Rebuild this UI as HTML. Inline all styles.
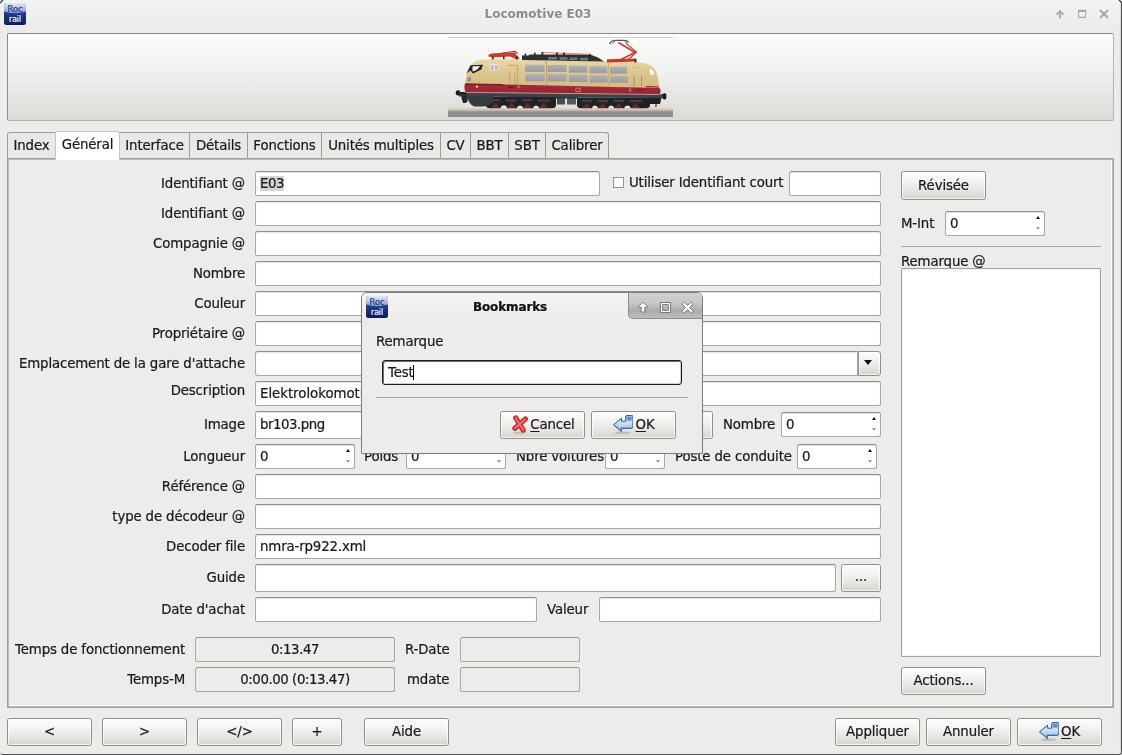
<!DOCTYPE html>
<html lang="fr">
<head>
<meta charset="utf-8">
<title>Locomotive E03</title>
<style>
*{box-sizing:border-box;margin:0;padding:0}
html,body{width:1122px;height:755px;overflow:hidden}
body{background:#edeceb;font-family:"DejaVu Sans","Liberation Sans",sans-serif;font-size:13.33px;letter-spacing:-0.14px;color:#1a1a1a;-webkit-text-stroke:0.22px;position:relative}
.abs{position:absolute}
.lbl{position:absolute;white-space:nowrap;line-height:16px;height:17px;padding-top:1px}
.r{text-align:right}
.inp{position:absolute;height:25px;background:#fff;border:1px solid #a9a89f;border-top-color:#8f8e85;border-radius:2.5px;box-shadow:inset 0 1px 1px rgba(0,0,0,.10);padding:0 4px;line-height:23px;white-space:nowrap;overflow:hidden}
.ro{background:#edeceb;text-align:center;box-shadow:none;border-color:#a9a89f;border-top-color:#98978e;letter-spacing:-0.44px}
.btn{position:absolute;height:28px;border:1px solid #929188;border-radius:2.5px;background:linear-gradient(#fdfdfc 0%,#f3f3f1 35%,#e6e5e2 68%,#d5d4d0 100%);text-align:center;line-height:26px;white-space:nowrap;box-shadow:inset 0 0 0 1px rgba(255,255,255,.7)}
u{text-underline-offset:2.0px;text-decoration-thickness:1px}
.spin .ar{position:absolute;right:4.5px;width:0;height:0;border-left:2.5px solid transparent;border-right:2.5px solid transparent}
.spin .up{top:4px;border-bottom:3px solid #111}
.spin .dn{top:15px;border-top:3px solid #9b9b9b}
#titlebar{left:0;top:0;width:1122px;height:28px;background:linear-gradient(#f3f3f2,#edeceb)}
#title{left:0;width:1076px;top:6px;text-align:center;font-weight:bold;color:#8b8b89;font-size:12px;line-height:16px;-webkit-text-stroke:0;letter-spacing:0;text-shadow:0 1px 0 rgba(255,255,255,.8)}
.tab{position:absolute;top:132px;height:26px;padding-top:1px;border:1px solid #9d9c94;border-bottom:none;border-left:none;background:#e9e8e6;line-height:24px;text-align:center;white-space:nowrap}
.tab.first{border-left:1px solid #9d9c94;border-top-left-radius:3px}
.tab.act{top:131px;height:29px;padding-top:0;background:#fff;border:1px solid #c4c3bd;border-bottom:none;border-radius:3px 3px 0 0;line-height:25px;z-index:2}
</style>
</head>
<body>
<div id="root" style="position:absolute;left:0;top:0;width:1122px;height:755px;will-change:transform">

<svg width="0" height="0" style="position:absolute">
<defs>
<linearGradient id="icTop" x1="0" y1="0" x2="0" y2="1"><stop offset="0" stop-color="#e3e8f9"/><stop offset="1" stop-color="#8799d4"/></linearGradient>
<linearGradient id="icBot" x1="0" y1="0" x2="0" y2="1"><stop offset="0" stop-color="#3553a8"/><stop offset="0.5" stop-color="#203a8c"/><stop offset="1" stop-color="#0a1a60"/></linearGradient>
<clipPath id="icClip"><rect x="0" y="0" width="22" height="22" rx="2.5"/></clipPath>
<symbol id="rocicon" viewBox="0 0 22 22">
<g clip-path="url(#icClip)">
<rect width="22" height="22" fill="url(#icBot)"/>
<path d="M0 0H22V8.6Q11 11.8 0 8.6Z" fill="url(#icTop)"/>
</g>
<text x="11" y="8.9" font-family="DejaVu Sans, Liberation Sans, sans-serif" font-size="8" text-anchor="middle" fill="#32468e" stroke="#32468e" stroke-width=".25" textLength="15" lengthAdjust="spacingAndGlyphs">Roc</text>
<text x="11" y="19.2" font-family="DejaVu Sans, Liberation Sans, sans-serif" font-size="8" text-anchor="middle" fill="#f4f6ff" stroke="#f4f6ff" stroke-width=".2" textLength="12" lengthAdjust="spacingAndGlyphs">rail</text>
</symbol>
<linearGradient id="okg" x1="0" y1="0" x2="0" y2="1"><stop offset="0" stop-color="#8fb4e2"/><stop offset="0.4" stop-color="#c3d8f0"/><stop offset="0.62" stop-color="#9dbee8"/><stop offset="1" stop-color="#5c8ecd"/></linearGradient>
<symbol id="okicon" viewBox="0 0 20 19">
<ellipse cx="9.6" cy="17.7" rx="8" ry="1.2" fill="#000" opacity=".16"/>
<path d="M8.6 3V6.2H12.7V1.5Q12.7 0.5 13.7 0.5H18.9Q19.9 0.5 19.9 1.5V11.4Q19.9 13.4 17.9 13.4H8.4V16.6L0.4 9.8Z" fill="url(#okg)" stroke="#2f62a6" stroke-width="1" stroke-linejoin="round"/>
<rect x="14.3" y="1.9" width="4.2" height="3.6" fill="#4f82c4" opacity=".85"/>
<path d="M7.4 5.6V7.4H13.9V6.6H18.6V10.8Q18.6 12.1 17.3 12.1H7.2V14L2.2 9.8Z" fill="#dbe9f8" opacity=".55"/>
</symbol>
<linearGradient id="cxg" x1="0" y1="0" x2="0" y2="1"><stop offset="0" stop-color="#f58a8a"/><stop offset="0.5" stop-color="#e23a3a"/><stop offset="1" stop-color="#ef6a6a"/></linearGradient>
<symbol id="cancelicon" viewBox="0 0 17 19">
<ellipse cx="7.6" cy="17.8" rx="6.4" ry="1.1" fill="#000" opacity=".15"/>
<g fill="none" stroke-linecap="round">
<path d="M3.6 2.8L11.2 15.2M13.4 4L2.8 13.4" stroke="#ba1620" stroke-width="5"/>
<path d="M3.6 2.8L11.2 15.2M13.4 4L2.8 13.4" stroke="#ea4046" stroke-width="3.2"/>
<path d="M3.8 3.2L11 14.8M13 4.4L3.2 13" stroke="#f79a9a" stroke-width="1.1" opacity=".75"/>
</g>
</symbol>
</defs>
</svg>
<!-- window frame -->
<div class="abs" id="titlebar"></div>
<div class="abs" id="title">Locomotive E03</div>

<!-- image panel -->
<div class="abs" id="imgpanel" style="left:7px;top:33px;width:1107px;height:88px;border:1px solid #8c8b83;border-right-color:#b5b4ae;border-bottom-color:#b5b4ae;border-radius:2px;background:linear-gradient(#fcfcfb 0%,#f1f1ef 42%,#dadad7 100%)"></div>


<!-- locomotive picture -->
<svg class="abs" id="loco" style="left:446px;top:35px" width="230" height="84" viewBox="446 35 230 84">
<defs>
<linearGradient id="lbg" x1="0" y1="0" x2="0" y2="1"><stop offset="0" stop-color="#ffffff"/><stop offset=".55" stop-color="#f4f4f3"/><stop offset="1" stop-color="#e4e4e2"/></linearGradient>
<linearGradient id="beige" x1="0" y1="0" x2="0" y2="1"><stop offset="0" stop-color="#ead9a6"/><stop offset=".35" stop-color="#dfca94"/><stop offset="1" stop-color="#d3ba80"/></linearGradient>
<linearGradient id="redb" x1="0" y1="0" x2="0" y2="1"><stop offset="0" stop-color="#7e1c2a"/><stop offset=".25" stop-color="#a22a3a"/><stop offset="1" stop-color="#962434"/></linearGradient>
<linearGradient id="grl" x1="0" y1="0" x2="0" y2="1"><stop offset="0" stop-color="#b0b1b4"/><stop offset="1" stop-color="#9a9b9e"/></linearGradient>
<filter id="soft" x="-5%" y="-5%" width="110%" height="110%"><feGaussianBlur stdDeviation="0.38"/></filter>
</defs>
<rect x="448" y="37" width="225" height="1" fill="#cfcfcd"/>
<g filter="url(#soft)">
<!-- track -->
<rect x="448" y="108.3" width="225" height="3" fill="#d6c9b3"/>
<rect x="448" y="110.8" width="225" height="6.2" fill="#8e8e8e"/>
<rect x="448" y="110.6" width="225" height="1" fill="#a9a39a"/>
<!-- bogies -->
<path d="M486 97H556V105Q556 108.3 552 108.3H490Q486 108.3 486 105Z" fill="#202124"/>
<path d="M577 97.5H650V105Q650 108.3 646 108.3H581Q577 108.3 577 105Z" fill="#202124"/>
<rect x="557" y="98" width="8" height="6.5" fill="#4a4d52"/><rect x="567" y="98" width="9" height="6.5" fill="#55585d"/>
<rect x="556" y="96" width="22" height="2.5" fill="#2a2d31"/>
<g fill="#7d2320"><rect x="492" y="105.6" width="7" height="2.2"/><rect x="508" y="105.6" width="7" height="2.2"/><rect x="524" y="105.6" width="7" height="2.2"/><rect x="540" y="105.6" width="7" height="2.2"/><rect x="583" y="105.8" width="7" height="2.2"/><rect x="599" y="105.8" width="7" height="2.2"/><rect x="615" y="105.8" width="7" height="2.2"/><rect x="632" y="105.8" width="7" height="2.2"/></g>
<g fill="#e9e6e0"><path d="M500 108.4L502 105.6H505.6L507.6 108.4Z"/><path d="M516.4 108.4L518.4 105.8H521.6L523.6 108.4Z"/><path d="M532.6 108.4L534.6 105.8H537.6L539.6 108.4Z"/><path d="M591.4 108.4L593.4 105.8H596.4L598.4 108.4Z"/><path d="M607.6 108.4L609.6 105.8H612.6L614.6 108.4Z"/><path d="M623.8 108.4L625.8 105.8H629.2L631.2 108.4Z"/></g>
<g fill="#3e4044"><rect x="490" y="99" width="10" height="2.4"/><rect x="506" y="99.4" width="10" height="2.4"/><rect x="522" y="99" width="10" height="2.4"/><rect x="538" y="99.4" width="12" height="2.4"/><rect x="582" y="99.6" width="10" height="2.4"/><rect x="598" y="99.8" width="10" height="2.4"/><rect x="614" y="99.6" width="10" height="2.4"/><rect x="630" y="99.8" width="12" height="2.4"/></g>
<g fill="#4a3a36"><circle cx="495.5" cy="104.4" r="1.6"/><circle cx="511.5" cy="104.4" r="1.6"/><circle cx="527.5" cy="104.4" r="1.6"/><circle cx="543.5" cy="104.4" r="1.6"/><circle cx="586.5" cy="104.6" r="1.6"/><circle cx="602.5" cy="104.6" r="1.6"/><circle cx="618.5" cy="104.6" r="1.6"/><circle cx="635.5" cy="104.6" r="1.6"/></g>
<!-- front skirt / rear parts -->
<path d="M467.5 92H494V101Q490 106.5 482 106.5H474Q468.5 104 467.5 97Z" fill="#353b41"/>

<path d="M648 96H662L660 104H650Z" fill="#222428"/>
<!-- frame -->
<path d="M459 92L663 94.2V98L459 96.6Z" fill="#3c4349"/>
<rect x="455.8" y="90.2" width="4.4" height="5.4" rx="2" fill="#1b1c1f"/><rect x="459" y="92.2" width="8" height="2.6" fill="#24262a"/>
<rect x="662.6" y="93.2" width="3.8" height="6.2" rx="1.6" fill="#1b1c1f"/>
<!-- body beige -->
<path d="M465.4 85Q465.6 76 468.6 69.5L472 64Q475 60.6 482 59.6Q500 58.6 525 59.8L600 61.2L640 62.4Q650 63.4 654.5 68.5Q658.6 76 659.4 88.5L465.4 85Z" fill="url(#beige)"/>
<!-- red band -->
<path d="M465 83.6L659.6 88Q661.5 91 659.6 94.5L465.6 92.4Q463.6 88 465 83.6Z" fill="url(#redb)"/>
<path d="M465.6 92.4L659.6 94.5" stroke="#d8c79a" stroke-width=".7"/>
<path d="M646 86.6L659 87" stroke="#9a2030" stroke-width="1.2"/>
<path d="M466 84L503 84.6" stroke="#821a28" stroke-width="1.2"/>
<!-- roof equipment -->
<path d="M522 55.4H528L530 54.4H590L598 57.4L604 61.4L522 60Z" fill="#2e322f"/>
<g fill="#70757a"><rect x="548" y="57" width="9" height="2.6"/><rect x="559.5" y="57.2" width="8" height="2.6"/><rect x="569.5" y="57.4" width="8" height="2.6"/><rect x="580" y="57.8" width="8" height="2.6"/></g>
<path d="M542 52.4L591 54.4" stroke="#d9747a" stroke-width=".9"/>
<g fill="#2a2a2a"><rect x="541.5" y="52" width="1.8" height="3.4"/><rect x="556" y="52.4" width="1.8" height="3"/><rect x="563" y="52.6" width="1.8" height="3"/><rect x="589" y="54" width="1.8" height="3"/><rect x="524.6" y="53.6" width="1.6" height="3.6"/><rect x="534" y="52.6" width="1.6" height="3.6"/></g>
<!-- folded pantograph left -->
<path d="M488 56.2Q489 53.4 494 53.2L515 52.4L517 56L520 58.6L516 59.2L510 56.6L492 57.6Z" fill="#d23a2c"/>
<path d="M502 53L515 51.4L517.6 53.4" fill="none" stroke="#c03a30" stroke-width="1.2"/>
<rect x="492" y="56.6" width="1.6" height="3" fill="#333"/><rect x="503" y="56.2" width="1.6" height="3" fill="#333"/><rect x="516" y="56" width="1.8" height="3.4" fill="#333"/>
<!-- raised pantograph right -->
<path d="M607 59.2L636 58.6L636.4 61.6L607 62.4Z" fill="#c8382c"/>
<path d="M620 60L635 52.4L618.4 42.6" fill="none" stroke="#cf3d30" stroke-width="1.7"/>
<path d="M628 60L636.4 52L626 43.4" fill="none" stroke="#cf3d30" stroke-width="1.2"/>
<path d="M609.6 44Q611 40.4 616 40.4H624Q627.6 40.4 628.4 42.6" fill="none" stroke="#55585a" stroke-width="1.4"/>
<path d="M612 44.4L615 41M625 41L627 44" stroke="#6a6d70" stroke-width="1"/>
<rect x="634.6" y="59" width="1.8" height="3.6" fill="#333"/>
<!-- grilles -->
<g fill="url(#grl)">
<rect x="525" y="64.8" width="19.6" height="7"/><rect x="547.4" y="65" width="19.2" height="7"/><rect x="568.8" y="65.6" width="18.6" height="7"/><rect x="589.4" y="66.2" width="18" height="7"/><rect x="610" y="66.8" width="17" height="6.8"/>
<rect x="525.4" y="74" width="19.4" height="7.2"/><rect x="547.6" y="74.2" width="19" height="7.2"/><rect x="569" y="74.8" width="18.6" height="7.2"/><rect x="589.6" y="75.4" width="18" height="7.2"/><rect x="610.2" y="76" width="17.6" height="6.8"/>
</g>
<path d="M545.6 60.4Q546.6 62 546.6 66V84.6" fill="none" stroke="#b89c5a" stroke-width=".9"/>
<path d="M608.6 62V86" fill="none" stroke="#c2a765" stroke-width=".8"/>
<!-- doors -->
<path d="M507 65.4H517.6V84M509.6 72.4V83.4M515 72.4V83.4" fill="none" stroke="#b79c5c" stroke-width=".8"/>
<path d="M634 75.4V86M641.6 75.4V86.2" fill="none" stroke="#a88d4e" stroke-width=".9"/>
<path d="M633 67.6H642" stroke="#c6ad6e" stroke-width=".6"/>
<!-- windows -->
<path d="M466.4 73.6L470.6 65.2L483 64.8L481.4 69.6L473 73.4L470.4 70.4Z" fill="#24282b"/>
<path d="M472.4 66.4L480 66L477.6 69.8L472.6 71.6Z" fill="#f2f2f0"/>
<path d="M474.6 72.2L480 67" stroke="#222" stroke-width=".8"/>
<rect x="489.6" y="64.2" width="9.2" height="6.2" fill="#eceae6"/><rect x="490.6" y="65.2" width="7.4" height="4.4" fill="#b9bcc0"/><rect x="493.9" y="64.6" width="1" height="5.6" fill="#f4f2ee"/>
<path d="M467.8 77.4L470.8 77V81.4L467.4 81.6Z" fill="#8c9490"/>
<path d="M648.6 69.4Q649.4 68 651.6 68.6Q654.6 71 655.2 74.6Q654 76 651.2 75.4Q648.4 74 648.6 69.4Z" fill="#f6f6f4" stroke="#bda868" stroke-width=".6"/>
<!-- small details -->
<circle cx="477" cy="86.6" r="1.2" fill="#f4ead8"/>
<rect x="575.8" y="88.2" width="4.6" height="3.4" rx=".6" fill="none" stroke="#dba0a6" stroke-width=".7"/>
<rect x="508" y="86.4" width="5" height="1.4" fill="#7c1622"/><rect x="637" y="89.6" width="5" height="1.4" fill="#7c1622"/>
<rect x="517.6" y="85.4" width="2" height="3" fill="#d08a90" opacity=".7"/><rect x="629" y="88.2" width="2.4" height="3.4" fill="#d08a90" opacity=".6"/>
<path d="M461.6 95.6H467.6V101.4L465.4 103H463.2L461.6 99Z" fill="#25272a"/>
<path d="M656 98V107" stroke="#222" stroke-width="1.1"/>
</g>
</svg>

<!-- notebook body -->
<div class="abs" id="nb" style="left:7px;top:158px;width:1107px;height:550px;border:1px solid #a09f97;box-shadow:inset 0 0 0 1px #bab9b3, inset -2px -2px 0 0 #ffffff"></div>

<!-- tabs -->
<div class="tab first" style="left:7px;width:49px">Index</div>
<div class="tab act" style="left:55px;width:65px">Général</div>
<div class="tab" style="left:120px;width:70px">Interface</div>
<div class="tab" style="left:190px;width:58px">Détails</div>
<div class="tab" style="left:248px;width:74px">Fonctions</div>
<div class="tab" style="left:322px;width:119px">Unités multiples</div>
<div class="tab" style="left:441px;width:30px">CV</div>
<div class="tab" style="left:471px;width:38px">BBT</div>
<div class="tab" style="left:509px;width:37px">SBT</div>
<div class="tab" style="left:546px;width:63px;border-top-right-radius:3px">Calibrer</div>

<!-- form labels -->
<div class="lbl r" style="right:877px;top:175px">Identifiant @</div>
<div class="lbl r" style="right:877px;top:205px">Identifiant @</div>
<div class="lbl r" style="right:877px;top:235px">Compagnie @</div>
<div class="lbl r" style="right:877px;top:265px">Nombre</div>
<div class="lbl r" style="right:877px;top:295px">Couleur</div>
<div class="lbl r" style="right:877px;top:325px">Propriétaire @</div>
<div class="lbl r" style="right:877px;top:355px">Emplacement de la gare d'attache</div>
<div class="lbl r" style="right:877px;top:382px">Description</div>
<div class="lbl r" style="right:877px;top:416px">Image</div>
<div class="lbl r" style="right:877px;top:448px">Longueur</div>
<div class="lbl r" style="right:877px;top:478px">Référence @</div>
<div class="lbl r" style="right:877px;top:508px">type de décodeur @</div>
<div class="lbl r" style="right:877px;top:538px">Decoder file</div>
<div class="lbl r" style="right:877px;top:569px">Guide</div>
<div class="lbl r" style="right:877px;top:601px">Date d'achat</div>

<!-- form inputs -->
<div class="inp" style="left:255px;top:171px;width:345px"><span style="background:#d6d5d3;letter-spacing:-0.45px;padding-right:0.4px">E03</span></div>
<div class="abs" style="left:613px;top:177px;width:11px;height:11px;border:1px solid #96958c;background:#fff"></div>
<div class="lbl" style="left:629px;top:174px">Utiliser Identifiant court</div>
<div class="inp" style="left:789px;top:171px;width:92px"></div>
<div class="inp" style="left:255px;top:201px;width:626px"></div>
<div class="inp" style="left:255px;top:231px;width:626px"></div>
<div class="inp" style="left:255px;top:261px;width:626px"></div>
<div class="inp" style="left:255px;top:291px;width:626px"></div>
<div class="inp" style="left:255px;top:321px;width:626px"></div>
<div class="inp" style="left:255px;top:351px;width:603px;border-radius:3px 0 0 3px"></div>
<div class="btn" style="left:858px;top:351px;width:23px;height:25px;border-radius:0 3px 3px 0"><span class="abs" style="left:5px;top:8px;width:0;height:0;border-left:4.5px solid transparent;border-right:4.5px solid transparent;border-top:5px solid #111"></span></div>
<div class="inp" style="left:255px;top:381px;width:626px;letter-spacing:-0.03px">Elektrolokomotive</div>
<div class="inp" style="left:255px;top:411px;width:418px;height:28px;line-height:26px;letter-spacing:-0.47px">br103.png</div>
<div class="btn" style="left:675px;top:411px;width:38px;height:28px">...</div>
<div class="lbl" style="left:723px;top:416px">Nombre</div>
<div class="inp spin" style="left:781px;top:412px;width:100px">0<i class="ar up"></i><i class="ar dn"></i></div>
<div class="inp spin" style="left:255px;top:444px;width:100px">0<i class="ar up"></i><i class="ar dn"></i></div>
<div class="lbl" style="left:364px;top:448px">Poids</div>
<div class="inp spin" style="left:406px;top:444px;width:100px">0<i class="ar up"></i><i class="ar dn"></i></div>
<div class="lbl" style="left:516px;top:448px">Nbre voitures</div>
<div class="inp spin" style="left:605px;top:444px;width:60px">0<i class="ar up"></i><i class="ar dn"></i></div>
<div class="lbl" style="left:675px;top:448px">Poste de conduite</div>
<div class="inp spin" style="left:797px;top:444px;width:80px">0<i class="ar up"></i><i class="ar dn"></i></div>
<div class="inp" style="left:255px;top:474px;width:626px"></div>
<div class="inp" style="left:255px;top:504px;width:626px"></div>
<div class="inp" style="left:255px;top:534px;width:626px">nmra-rp922.xml</div>
<div class="inp" style="left:255px;top:564px;width:581px;height:28px"></div>
<div class="btn" style="left:841px;top:564px;width:40px;height:28px;line-height:24px">...</div>
<div class="inp" style="left:255px;top:597px;width:282px"></div>
<div class="lbl" style="left:547px;top:601px">Valeur</div>
<div class="inp" style="left:599px;top:597px;width:282px"></div>

<!-- runtime row -->
<div class="lbl" style="left:15px;top:641px">Temps de fonctionnement</div>
<div class="inp ro" style="left:195px;top:637px;width:200px;height:25px">0:13.47</div>
<div class="lbl" style="left:405px;top:641px">R-Date</div>
<div class="inp ro" style="left:460px;top:637px;width:120px;height:25px"></div>
<div class="lbl r" style="right:937px;top:671px">Temps-M</div>
<div class="inp ro" style="left:195px;top:667px;width:200px;height:25px">0:00.00 (0:13.47)</div>
<div class="lbl" style="left:407px;top:671px">mdate</div>
<div class="inp ro" style="left:460px;top:667px;width:120px;height:25px"></div>

<!-- right column -->
<div class="btn" style="left:901px;top:171px;width:85px;height:29px;line-height:27px">Révisée</div>
<div class="lbl" style="left:901px;top:215px">M-Int</div>
<div class="inp spin" style="left:945px;top:211px;width:100px;height:25px">0<i class="ar up"></i><i class="ar dn"></i></div>
<div class="abs" style="left:901px;top:246px;width:200px;height:1px;background:#a8a79f"></div>
<div class="lbl" style="left:901px;top:253px">Remarque @</div>
<div class="inp" style="left:901px;top:268px;width:200px;height:389px;border-radius:1px;border-color:#a3a29a;box-shadow:inset 0 0 0 1px #f4f4f2"></div>
<div class="btn" style="left:901px;top:667px;width:85px;height:28px">Actions...</div>

<!-- bottom buttons -->
<div class="btn" style="left:7px;top:718px;width:85px">&lt;</div>
<div class="btn" style="left:102px;top:718px;width:85px">&gt;</div>
<div class="btn" style="left:197px;top:718px;width:85px">&lt;/&gt;</div>
<div class="btn" style="left:292px;top:718px;width:50px">+</div>
<div class="btn" style="left:364px;top:718px;width:85px">Aide</div>
<div class="btn" style="left:835px;top:718px;width:85px">Appliquer</div>
<div class="btn" style="left:926px;top:718px;width:85px">Annuler</div>
<div class="btn" style="left:1017px;top:718px;width:85px"><span style="margin-left:22px"><u>O</u>K</span></div>

<svg class="abs" style="left:4px;top:3px" width="22" height="22"><use href="#rocicon"/></svg>
<!-- main window controls -->
<svg class="abs" style="left:1050px;top:5px" width="66" height="18" viewBox="0 0 66 18">
<path d="M10 13.5V7.2M6.6 9.6L10 6L13.4 9.6" fill="none" stroke="#a9a9a9" stroke-width="1.8"/>
<path d="M28.6 6.4H35.6V12.4H28.6Z" fill="none" stroke="#ababab" stroke-width="1.1"/><path d="M28 5.6H36.2" stroke="#a6a6a6" stroke-width="1.6"/>
<path d="M50 5L58 13M58 5L50 13" fill="none" stroke="#a6a6a6" stroke-width="2"/>
</svg>
<!-- main OK icon -->
<svg class="abs" style="left:1039px;top:722px" width="20" height="19"><use href="#okicon"/></svg>

<!-- window border -->
<div class="abs" style="left:0;top:0;width:1122px;height:755px;border-right:1px solid #505050;border-bottom:1px solid #505050;border-radius:4px 4px 3px 3px;pointer-events:none"></div>
<svg class="abs" style="left:0;top:0" width="5" height="5"><path d="M0 0H2.2L0 2.2Z" fill="#d8d8d8"/><path d="M0 3L3 0" stroke="#3c3c3c" stroke-width="1.2"/></svg>
<svg class="abs" style="left:1117px;top:0" width="5" height="5"><path d="M5 0H2.8L5 2.2Z" fill="#d8d8d8"/><path d="M2 0L5 3" stroke="#3c3c3c" stroke-width="1.2"/></svg>

<div class="abs" style="left:1119px;top:5px;width:2px;height:746px;background:linear-gradient(90deg,rgba(255,255,255,.35),rgba(160,160,160,.35))"></div>
<!-- Bookmarks dialog -->
<div class="abs" id="dlg" style="left:361px;top:292px;width:342px;height:162px;background:#edeceb;border:1px solid #7b7b7b;border-radius:6px 6px 1px 1px;overflow:hidden">
  <div class="abs" style="left:0;top:0;width:340px;height:26px;background:linear-gradient(#f4f4f3,#edeceb)"></div>
  <div class="abs" style="left:266px;top:-1px;width:76px;height:27px;border:1px solid #8d8d8d;border-top:none;border-right:none;border-radius:0 0 0 5px;background:linear-gradient(#d3d3d3 0%,#c6c6c6 45%,#ababab 72%,#bdbdbd 100%)"></div>
  <svg class="abs" style="left:270px;top:4px" width="70" height="20" viewBox="0 0 70 20">
   <g fill="#fff" stroke="#7a7a7a" stroke-width="1" stroke-linejoin="round">
    <path d="M11 5L16 10.2H12.8V15H9.2V10.2H6Z"/>
    <path d="M28.5 5.5H38.5V15.5H28.5ZM30.6 7.6H36.4V13.4H30.6Z" fill-rule="evenodd"/>
    <path d="M51.6 5L55.5 8.4L59.4 5L61.2 6.8L57.6 10.5L61.2 14.2L59.4 16L55.5 12.6L51.6 16L49.8 14.2L53.4 10.5L49.8 6.8Z"/>
   </g>
  </svg>
  <svg class="abs" style="left:4px;top:3px" width="22" height="22"><use href="#rocicon"/></svg>
  <div class="abs" style="left:0;width:296px;top:6px;text-align:center;font-weight:bold;font-size:12px;line-height:16px;color:#111">Bookmarks</div>
  <div class="lbl" style="left:14px;top:40px">Remarque</div>
  <div class="abs" style="left:20px;top:67px;width:300px;height:25px;background:#fff;border:1px solid #1c1c1c;border-radius:3px;box-shadow:inset 1px 1px 0 #6f6f6f, inset -1px -1px 0 #cfcfcf;padding:0 5px;line-height:23px">Test<span class="abs" style="left:30px;top:4px;width:1px;height:15px;background:#000"></span></div>
  <div class="abs" style="left:14px;top:104px;width:312px;height:1px;background:#a8a79f"></div>
  <div class="btn" style="left:138px;top:118px;width:85px"><svg class="abs" style="left:11px;top:3px" width="17" height="19"><use href="#cancelicon"/></svg><span style="margin-left:20px"><u>C</u>ancel</span></div>
  <div class="btn" style="left:229px;top:118px;width:85px"><svg class="abs" style="left:21px;top:3px" width="20" height="19"><use href="#okicon"/></svg><span style="margin-left:23px"><u>O</u>K</span></div>
</div>

</div>
</body>
</html>
